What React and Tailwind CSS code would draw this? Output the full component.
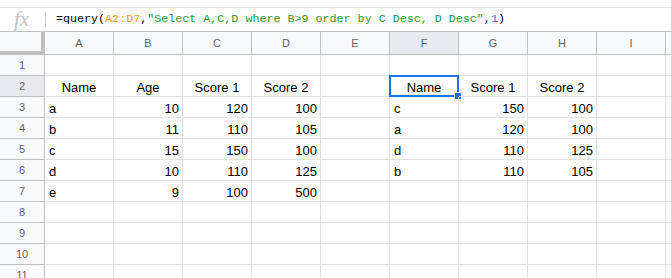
import React from 'react';

const cols = ['A', 'B', 'C', 'D', 'E', 'F', 'G', 'H', 'I'];

// each row: 9 cells, value or null; strings starting with letters are left, numbers right
const data = {
  2: [['Name', 'c'], ['Age', 'c'], ['Score 1', 'c'], ['Score 2', 'c'], null, ['Name', 'c'], ['Score 1', 'c'], ['Score 2', 'c'], null],
  3: [['a', 'l'], ['10', 'r'], ['120', 'r'], ['100', 'r'], null, ['c', 'l'], ['150', 'r'], ['100', 'r'], null],
  4: [['b', 'l'], ['11', 'r'], ['110', 'r'], ['105', 'r'], null, ['a', 'l'], ['120', 'r'], ['100', 'r'], null],
  5: [['c', 'l'], ['15', 'r'], ['150', 'r'], ['100', 'r'], null, ['d', 'l'], ['110', 'r'], ['125', 'r'], null],
  6: [['d', 'l'], ['10', 'r'], ['110', 'r'], ['125', 'r'], null, ['b', 'l'], ['110', 'r'], ['105', 'r'], null],
  7: [['e', 'l'], ['9', 'r'], ['100', 'r'], ['500', 'r'], null, null, null, null, null],
};

const alignClass = {
  l: 'justify-start pl-[4px]',
  r: 'justify-end pr-[3px]',
  c: 'justify-center',
};

const Cell = ({ value, selected }) => (
  <div
    className={`relative h-[21px] border-r border-b border-[#e2e2e2] flex items-end pb-[1px] text-[13px] leading-[15px] text-black ${value ? alignClass[value[1]] : ''}`}
  >
    {value && <span>{value[0]}</span>}
    {selected && (
      <>
        <div className="absolute left-[-1px] top-[-1px] right-[-1px] bottom-[-1px] border-2 border-[#1a73e8]" />
        <div className="absolute right-[-4px] bottom-[-4px] w-[6px] h-[6px] bg-[#1a73e8] border border-white box-content" />
      </>
    )}
  </div>
);

export default function App() {
  const rows = [1, 2, 3, 4, 5, 6, 7, 8, 9, 10, 11];

  return (
    <div className="w-[671px] h-[278px] overflow-hidden bg-white" style={{ fontFamily: '"Liberation Sans", Arial, sans-serif' }}>
      <div className="h-[7px] bg-white" />
      {/* formula bar */}
      <div className="h-[24px] border-t border-[#e2e2e2] flex items-center">
        <div className="w-[45px] flex items-center justify-center">
          <span className="italic text-[21px] leading-none text-[#c4c4c4] pr-[2px]" style={{ fontFamily: '"Liberation Serif", serif' }}>
            fx
          </span>
        </div>
        <div className="w-px h-[15px] bg-[#d0d0d0]" />
        <div
          className="pl-[10px] text-[11.7px] leading-none text-black whitespace-nowrap"
          style={{ fontFamily: '"Liberation Mono", monospace' }}
        >
          =query(<span className="text-[#f4a024]">A2:D7</span>,
          <span className="text-[#1e9b3a]">"Select A,C,D where B&gt;9 order by C Desc, D Desc"</span>,
          <span className="text-[#3a6fe0]">1</span>)
        </div>
      </div>

      <div className="grid grid-cols-[45px_repeat(9,69px)_1fr]">
        {/* column header */}
        <div className="h-[24px] bg-[#f8f9fa] border-t border-[#c0c0c0] relative">
          <div className="absolute left-0 top-0 w-[45px] h-[23px] border-r-4 border-b-4 border-[#c0c0c0]" />
        </div>
        {cols.map((c) => (
          <div
            key={c}
            className={`h-[24px] border-t border-r border-b border-[#c0c0c0] flex items-center justify-center text-[11px] text-[#5f6368] ${c === 'F' ? 'bg-[#e8eaed]' : 'bg-[#f8f9fa]'}`}
          >
            {c}
          </div>
        ))}
        <div className="h-[24px] border-t border-b border-[#c0c0c0] bg-[#f8f9fa]" />

        {rows.map((r) => (
          <React.Fragment key={r}>
            <div
              className={`h-[21px] border-r border-b border-[#c0c0c0] flex items-center justify-center text-[11px] text-[#5f6368] ${r === 2 ? 'bg-[#e8eaed]' : 'bg-[#f8f9fa]'}`}
            >
              {r}
            </div>
            {cols.map((c, i) => (
              <Cell key={c} value={data[r] ? data[r][i] : null} selected={r === 2 && c === 'F'} />
            ))}
            <div className="h-[21px] border-b border-[#e2e2e2]" />
          </React.Fragment>
        ))}
      </div>
    </div>
  );
}
